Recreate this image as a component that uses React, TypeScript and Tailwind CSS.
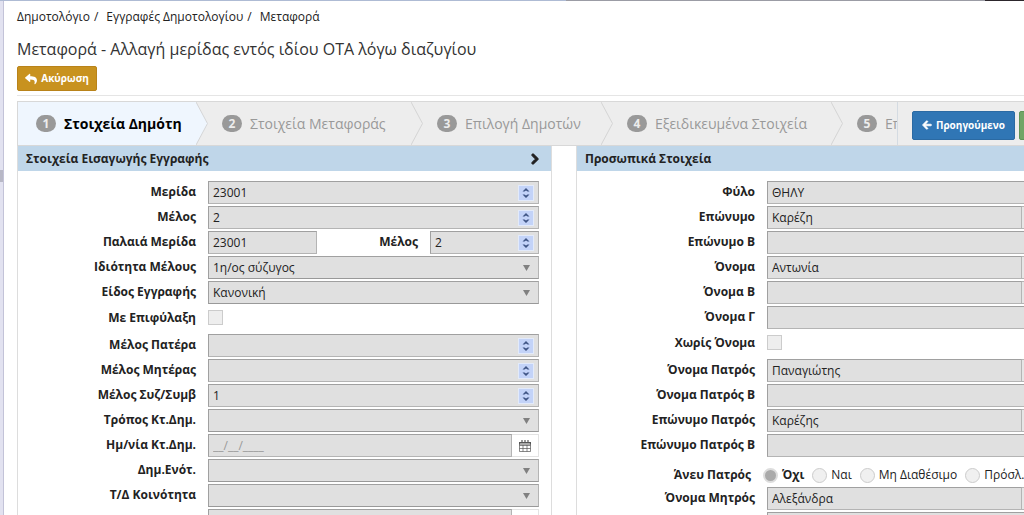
import { useState } from 'react';
import type { ReactNode } from 'react';
import { FaArrowLeft, FaChevronRight, FaReply } from 'react-icons/fa';

const FIELD = 'h-[23px] border border-[#b4b4b4] border-t-[#a0a0a0] border-l-[#a0a0a0] bg-[#e0e0e0]';
const INPUT = 'block h-full w-full min-w-0 bg-transparent px-1 text-xs text-[#222] outline-none placeholder:text-[#999]';

const STEPS = [
  { title: 'Στοιχεία Δημότη', width: 'w-[190px]', pad: 'pl-[18px]' },
  { title: 'Στοιχεία Μεταφοράς', width: 'w-[215px]', pad: 'pl-[14px]' },
  { title: 'Επιλογή Δημοτών', width: 'w-[190px]', pad: 'pl-[14px]' },
  { title: 'Εξειδικευμένα Στοιχεία', width: 'w-[230px]', pad: 'pl-[14px]' },
  { title: 'Επ', width: 'w-[190px]', pad: 'pl-[14px]' },
];

const FATHER_OPTIONS = ['Όχι', 'Ναι', 'Μη Διαθέσιμο', 'Πρόσλ.'];

function Row({ label, id, children }: { label: string; id: string; children: ReactNode }) {
  return (
    <div className="flex h-[25px] items-start gap-3">
      <label htmlFor={id} className="w-[178px] shrink-0 text-right text-xs leading-[22px] font-bold whitespace-nowrap text-[#222]">
        {label}
      </label>
      <div className="flex min-w-0 flex-1">{children}</div>
    </div>
  );
}

function Spinner({ id, value = '', narrow = false }: { id: string; value?: string; narrow?: boolean }) {
  return (
    <div className={`${FIELD} flex items-center pr-1 ${narrow ? 'w-[109px]' : 'flex-1'}`}>
      <input id={id} defaultValue={value} className={INPUT} />
      <button type="button" aria-label="Αλλαγή τιμής" className="h-4 w-4 shrink-0 border border-[#e2eafa] bg-[#c3d3f8]">
        <svg viewBox="0 0 14 14" className="h-[14px] w-[14px]" fill="#3f5585">
          <path d="M7 2L10.500 5.500H8.500L7 4.500L5.500 5.500H3.500zM7 12L10.500 8.500H8.500L7 9.500L5.500 8.500H3.500z" />
        </svg>
      </button>
    </div>
  );
}

function Dropdown({ id, value = '' }: { id: string; value?: string }) {
  return (
    <div className={`${FIELD} relative flex-1 border-b-[#999]`}>
      <select id={id} className={`${INPUT} appearance-none`}>
        <option>{value}</option>
      </select>
      <svg viewBox="0 0 7 6" className="pointer-events-none absolute top-2 right-2 h-[6px] w-[7px]" fill="#808080">
        <path d="M0 0h7L3.5 6z" />
      </svg>
    </div>
  );
}

function DateField({ id, label }: { id: string; label: string }) {
  return (
    <>
      <div className={`${FIELD} flex-1`}>
        <input id={id} aria-label={label} placeholder="__/__/____" className={INPUT} />
      </div>
      <button type="button" aria-label="Ημερολόγιο" className="flex h-[23px] w-[27px] items-center justify-center border border-l-0 border-[#e3e3e3] bg-white">
        <svg viewBox="0 0 12 13" className="h-[13px] w-3" fill="none" stroke="#555">
          <path d="M.5 3.5h11v9H.5zM.5 6.5h11M.5 9.5h11M4 6v6.500M8 6v6.500" strokeWidth=".7" />
          <path d="M.5 3.500h11v1.500H.5zM3 1v3M6 1v3M9 1v3" strokeWidth="1.200" />
        </svg>
      </button>
    </>
  );
}

function TextField({ id, value = '', lookup = false }: { id: string; value?: string; lookup?: boolean }) {
  return (
    <>
      <div className={`${FIELD} flex-1`}>
        <input id={id} defaultValue={value} className={INPUT} />
      </div>
      {lookup && (
        <button type="button" aria-label="Αναζήτηση" className="h-[23px] w-[76px] border border-l-0 border-[#b4b4b4] bg-[#e6e6e6]" />
      )}
    </>
  );
}

function CheckRow({ label, id }: { label: string; id: string }) {
  return (
    <div className="flex h-7 items-start gap-3 pt-1">
      <label htmlFor={id} className="w-[178px] shrink-0 text-right text-xs leading-4 font-bold text-[#222]">
        {label}
      </label>
      <input id={id} type="checkbox" className="h-[15px] w-[15px] appearance-none border border-[#ccc] bg-[#eee] checked:bg-[#aaa]" />
    </div>
  );
}

function Panel({ title, chevron = false, children }: { title: string; chevron?: boolean; children: ReactNode }) {
  return (
    <section className="min-w-0 border-x border-[#ddd]">
      <h2 className="flex h-[25px] items-center justify-between bg-[#bfd6e9] pr-3 pl-2 text-xs font-bold text-[#222]">
        {title}
        {chevron && <FaChevronRight className="h-3 w-2" stroke="currentColor" strokeWidth="50" />}
      </h2>
      <div className="pt-[10px] pr-3">{children}</div>
    </section>
  );
}

export default function App() {
  const [step, setStep] = useState(0);
  const [father, setFather] = useState('Όχι');

  return (
    <div className="flex h-screen flex-col overflow-hidden bg-white font-['Open_Sans','Noto_Sans',sans-serif] text-[#333]">
      <div className="flex h-px shrink-0">
        <div className="flex-[566] bg-[#aebbd4]" />
        <div className="flex-[419] bg-[#9b9ca5]" />
        <div className="flex-[39] bg-[#2c262c]" />
      </div>
      <div className="flex min-h-0 flex-1">
        <aside className="w-1 shrink-0 border-r border-[#c3c3d8] bg-[#e2e2f0] pt-[169px]">
          <div className="h-3 bg-[#b8b8c6]" />
        </aside>
        <main className="min-w-0 flex-1 overflow-hidden pl-[13px]">
          <nav className="flex h-[31px] items-center gap-1 text-xs text-[#222]">
            <a href="#registry">Δημοτολόγιο</a>
            <span className="pr-1">/</span>
            <a href="#records">Εγγραφές Δημοτολογίου</a>
            <span className="pr-1">/</span>
            <a href="#transfer">Μεταφορά</a>
          </nav>
          <h1 className="flex h-[34px] items-center text-base whitespace-nowrap">
            Μεταφορά - Αλλαγή μερίδας εντός ιδίου ΟΤΑ λόγω διαζυγίου
          </h1>
          <button type="button" className="flex h-[25px] w-20 items-center justify-center gap-1 rounded-xs border border-[#b9831a] bg-[#c8921f] text-[10px] font-bold text-white">
            <FaReply className="h-3 w-3" />
            Ακύρωση
          </button>
          <hr className="mt-1 mb-[5px] border-[#e5e5e5]" />

          <div className="min-w-[1094px]">
            <div className="flex h-[45px] border border-[#d8d8d8] bg-[#ededed]">
              <ol className="flex min-w-0 flex-1 overflow-hidden">
                {STEPS.map((s, i) => (
                  <li key={s.title} className={`flex shrink-0 ${s.width} ${i === step ? 'bg-[#eff6fe]' : ''}`}>
                    <button
                      type="button"
                      onClick={() => setStep(i)}
                      className={`flex min-w-0 flex-1 items-center gap-2 text-sm whitespace-nowrap ${s.pad} ${
                        i === step ? 'font-bold text-black' : 'text-[#999]'
                      }`}
                    >
                      <span className="flex h-[17px] w-5 shrink-0 items-center justify-center rounded-full bg-[#999] text-xs font-bold text-[#ededed]">
                        {i + 1}
                      </span>
                      {s.title}
                    </button>
                    <svg viewBox="0 0 12 43" className="h-[43px] w-3 shrink-0" preserveAspectRatio="none">
                      <path d="M0 0L12 21.5L0 43H12V0z" fill="#ededed" />
                      <path d="M0 0L11.500 21.500L0 43" fill="none" stroke="#d5d5d5" />
                    </svg>
                  </li>
                ))}
              </ol>
              <div className="flex w-[213px] shrink-0 items-center gap-1 border-l border-[#d4dbe2] pt-[3px] pl-[14px]">
                <button type="button" className="flex h-[29px] w-[103px] items-center justify-center gap-1 rounded-xs border border-[#2b6aa3] bg-[#3076b5] text-[10px] font-bold text-white">
                  <FaArrowLeft className="h-[10px] w-[10px]" stroke="currentColor" strokeWidth="40" />
                  Προηγούμενο
                </button>
                <button type="button" aria-label="Επόμενο" className="h-[29px] w-[86px] rounded-xs border border-[#5f9458] bg-[#71a566]" />
              </div>
            </div>

            <form className="grid grid-cols-2 gap-6">
              <Panel title="Στοιχεία Εισαγωγής Εγγραφής" chevron>
                <Row label="Μερίδα" id="merida"><Spinner id="merida" value="23001" /></Row>
                <Row label="Μέλος" id="melos"><Spinner id="melos" value="2" /></Row>
                <Row label="Παλαιά Μερίδα" id="oldMerida">
                  <div className={`${FIELD} w-[109px]`}>
                    <input id="oldMerida" defaultValue="23001" className={INPUT} />
                  </div>
                  <label htmlFor="oldMelos" className="flex-1 pr-3 text-right text-xs leading-[22px] font-bold text-[#222]">Μέλος</label>
                  <Spinner id="oldMelos" value="2" narrow />
                </Row>
                <Row label="Ιδιότητα Μέλους" id="role"><Dropdown id="role" value="1η/ος σύζυγος" /></Row>
                <Row label="Είδος Εγγραφής" id="kind"><Dropdown id="kind" value="Κανονική" /></Row>
                <CheckRow label="Με Επιφύλαξη" id="reserve" />
                <Row label="Μέλος Πατέρα" id="fatherNo"><Spinner id="fatherNo" /></Row>
                <Row label="Μέλος Μητέρας" id="motherNo"><Spinner id="motherNo" /></Row>
                <Row label="Μέλος Συζ/Συμβ" id="spouseNo"><Spinner id="spouseNo" value="1" /></Row>
                <Row label="Τρόπος Κτ.Δημ." id="method"><Dropdown id="method" /></Row>
                <Row label="Ημ/νία Κτ.Δημ." id="date"><DateField id="date" label="Ημ/νία Κτ.Δημ." /></Row>
                <Row label="Δημ.Ενότ." id="unit"><Dropdown id="unit" /></Row>
                <Row label="Τ/Δ Κοινότητα" id="community"><Dropdown id="community" /></Row>
                <Row label="" id="entryDate"><DateField id="entryDate" label="Ημερομηνία" /></Row>
              </Panel>

              <Panel title="Προσωπικά Στοιχεία">
                <Row label="Φύλο" id="sex"><TextField id="sex" value="ΘΗΛΥ" /></Row>
                <Row label="Επώνυμο" id="surname"><TextField id="surname" value="Καρέζη" lookup /></Row>
                <Row label="Επώνυμο Β" id="surname2"><TextField id="surname2" /></Row>
                <Row label="Όνομα" id="name"><TextField id="name" value="Αντωνία" lookup /></Row>
                <Row label="Όνομα Β" id="name2"><TextField id="name2" lookup /></Row>
                <Row label="Όνομα Γ" id="name3"><TextField id="name3" /></Row>
                <CheckRow label="Χωρίς Όνομα" id="noName" />
                <Row label="Όνομα Πατρός" id="fName"><TextField id="fName" value="Παναγιώτης" lookup /></Row>
                <Row label="Όνομα Πατρός Β" id="fName2"><TextField id="fName2" /></Row>
                <Row label="Επώνυμο Πατρός" id="fSurname"><TextField id="fSurname" value="Καρέζης" lookup /></Row>
                <Row label="Επώνυμο Πατρός Β" id="fSurname2"><TextField id="fSurname2" /></Row>
                <div role="radiogroup" aria-labelledby="noFather" className="flex h-7 items-center gap-3 pt-1 text-xs text-[#222]">
                  <span id="noFather" className="w-[174px] shrink-0 text-right font-bold">Άνευ Πατρός</span>
                  <div className="flex gap-2 whitespace-nowrap">
                    {FATHER_OPTIONS.map((o) => (
                      <label key={o} className={`flex items-center gap-1 ${father === o ? 'font-bold' : ''}`}>
                        <input
                          type="radio"
                          name="father"
                          checked={father === o}
                          onChange={() => setFather(o)}
                          className="h-[15px] w-[15px] shrink-0 appearance-none rounded-full border border-[#ccc] bg-[#f0f0f0] checked:border-2 checked:border-[#ddd] checked:bg-[#aaa]"
                        />
                        {o}
                      </label>
                    ))}
                  </div>
                </div>
                <Row label="Όνομα Μητρός" id="mName"><TextField id="mName" value="Αλεξάνδρα" lookup /></Row>
                <Row label="" id="mName2"><TextField id="mName2" /></Row>
              </Panel>
            </form>
          </div>
        </main>
      </div>
    </div>
  );
}
